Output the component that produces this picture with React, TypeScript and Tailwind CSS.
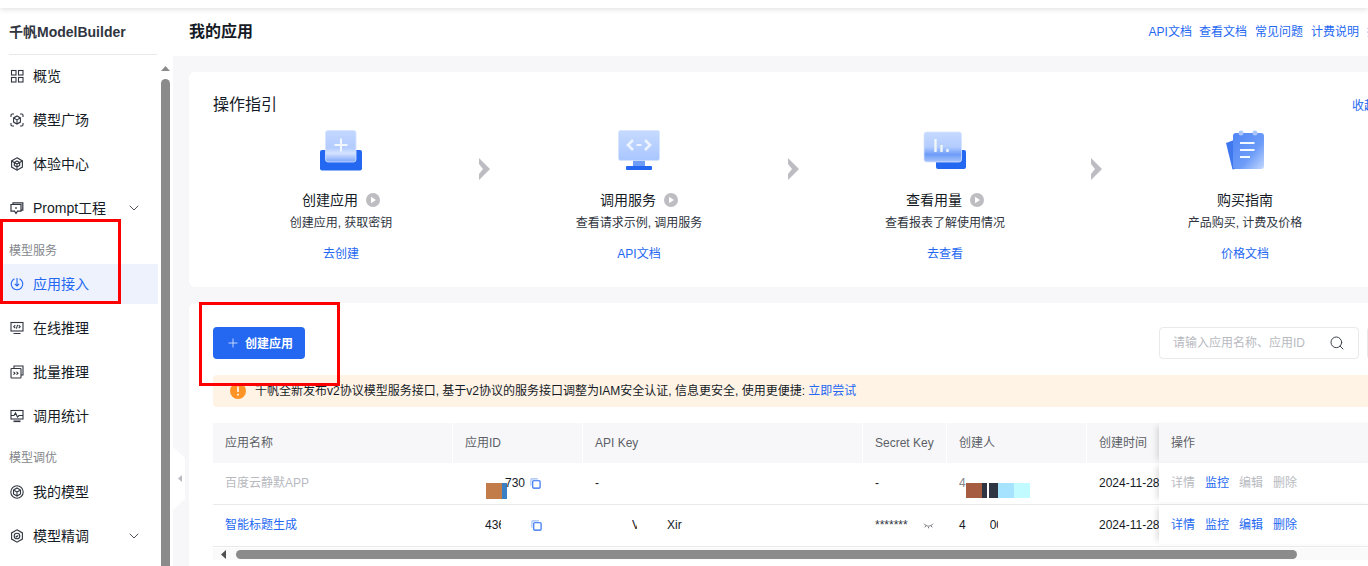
import { ChevronDown, Plus, Search } from 'lucide-react';
import type { ReactNode } from 'react';

const fontStack = 'font-["Liberation_Sans","Noto_Sans_CJK_SC",sans-serif]';

// Sidebar icons, all drawn on a 14x14 box
const NavIcons: Record<string, ReactNode> = {
  overview: (
    <g fill="none" stroke="currentColor" strokeWidth="1.1">
      <rect x="1.5" y="1.5" width="4.5" height="4.5" />
      <rect x="8.5" y="1.5" width="4.5" height="4.5" />
      <rect x="1.5" y="8.5" width="4.5" height="4.5" />
      <rect x="8.5" y="8.5" width="4.5" height="4.5" />
    </g>
  ),
  square: (
    <g fill="none" stroke="currentColor" strokeWidth="1.1">
      <path d="M1 4V2.2C1 1.5 1.5 1 2.2 1H4M10 1h1.8c.7 0 1.2.5 1.2 1.2V4M13 10v1.8c0 .7-.5 1.2-1.2 1.2H10M4 13H2.2C1.5 13 1 12.500 1 11.800V10" />
      <path d="M7 3l3.400 1.900v4.200L7 11 3.600 9.100V4.900zM3.600 4.900L7 6.900l3.400-2M7 6.900V11" />
    </g>
  ),
  center: (
    <g fill="none" stroke="currentColor" strokeWidth="1.1">
      <path d="M7 .8l5.400 3.100v6.200L7 13.200l-5.400-3.100V3.900z" />
      <path d="M7 4l2.700 1.500v3L7 10 4.300 8.500v-3zM1.600 3.900L7 7l5.400-3.100M7 7v6.200" />
    </g>
  ),
  prompt: (
    <g fill="none" stroke="currentColor" strokeWidth="1.2">
      <path d="M3 3V1.800h9.800v7.400H11" />
      <path d="M1 3.500h10v6.700H7.500L6 12.500l-1.500-2.300H1z" fill="#fff" />
      <path d="M6 6v2" />
    </g>
  ),
  access: (
    <g fill="none" stroke="currentColor" strokeWidth="1.1">
      <path d="M4.500 1.700a5.800 5.800 0 1 0 5 0" />
      <path d="M7 1v8M4.800 6.800L7 9l2.200-2.200" />
    </g>
  ),
  online: (
    <g fill="none" stroke="currentColor" strokeWidth="1.1">
      <rect x="1" y="1.500" width="12" height="8.500" />
      <path d="M5.300 4.200L3.800 5.700l1.500 1.500M8.700 4.200l1.500 1.500-1.500 1.500M7.600 3.800L6.400 7.700M3.500 12.500h7" />
    </g>
  ),
  batch: (
    <g fill="none" stroke="currentColor" strokeWidth="1.1">
      <path d="M4 3V1h9v9h-2" />
      <rect x="1" y="3.500" width="10" height="9.500" rx=".8" />
      <path d="M3.500 6.800l1.500 1.400-1.500 1.400M6.500 6.800L8 8.200 6.500 9.600" />
    </g>
  ),
  stats: (
    <g fill="none" stroke="currentColor" strokeWidth="1.1">
      <rect x="1" y="1.500" width="12" height="8.500" />
      <path d="M1 6.500h3l1.500-2.500 2 4L9 6.500h4" />
      <path d="M3.500 12.300h7" strokeWidth="1.600" />
    </g>
  ),
  model: (
    <g fill="none" stroke="currentColor" strokeWidth="1.1">
      <circle cx="7" cy="7" r="6.200" />
      <path d="M7 3l3.500 2v4L7 11 3.500 9V5zM3.500 5L7 7l3.500-2M7 7v4" />
    </g>
  ),
  tune: (
    <g fill="none" stroke="currentColor" strokeWidth="1.1">
      <path d="M7 .8l5.400 3.100v6.200L7 13.200l-5.400-3.100V3.900z" />
      <circle cx="7" cy="7" r="2.800" />
      <path d="M5.800 7l.9.9 1.500-1.600" />
    </g>
  ),
};

function NavItem({ icon, label, active, caret }: { icon: string; label: string; active?: boolean; caret?: boolean }) {
  return (
    <div className={`flex items-center pl-[10px] pr-4 text-sm ${active ? 'h-10 bg-[#edf2fd] text-[#2468f2]' : 'h-11 text-[#151b26]'}`}>
      <svg viewBox="0 0 14 14" className={`w-[14px] h-[14px] shrink-0 ${active ? '' : 'text-[#303540]'}`}>
        {NavIcons[icon]}
      </svg>
      <span className="ml-[9px]">{label}</span>
      {caret && <ChevronDown className="ml-auto text-[#303540]" size={16} strokeWidth={1.3} />}
    </div>
  );
}

function CreateIcon() {
  return (
    <svg viewBox="0 0 44 44" className="w-11 h-11">
      <defs>
        <linearGradient id="glassA" x1="0" y1="0" x2="0" y2="1">
          <stop offset="0" stopColor="#c3d8ff" />
          <stop offset="0.55" stopColor="#b3ccff" />
          <stop offset="0.72" stopColor="#d5e3ff" />
          <stop offset="1" stopColor="#7ea6fa" />
        </linearGradient>
      </defs>
      <rect x="1" y="21" width="42" height="20.500" rx="2" fill="#2468f2" />
      <rect x="6.500" y="1.500" width="30.500" height="31.500" rx="2.500" fill="url(#glassA)" stroke="#d6e3ff" strokeWidth="0.8" />
      <path d="M22 9.500v13M15.500 16h13" stroke="#f2f6ff" strokeWidth="2" />
    </svg>
  );
}

function ServiceIcon() {
  return (
    <svg viewBox="0 0 44 44" className="w-11 h-11">
      <defs>
        <linearGradient id="glassB" x1="0" y1="0" x2="0" y2="1">
          <stop offset="0" stopColor="#c6daff" />
          <stop offset="1" stopColor="#a9c6ff" />
        </linearGradient>
      </defs>
      <rect x="16" y="30" width="12" height="8" fill="#6e9df8" />
      <rect x="9" y="37" width="26" height="4" rx="1" fill="#2468f2" />
      <rect x="1.500" y="1.500" width="41" height="30" rx="2" fill="url(#glassB)" stroke="#d6e3ff" strokeWidth="0.8" />
      <path d="M16 11l-5 5 5 5M28 11l5 5-5 5" fill="none" stroke="#eef4ff" strokeWidth="2.600" />
      <path d="M19.500 16h5" fill="none" stroke="#eef4ff" strokeWidth="2" />
    </svg>
  );
}

function UsageIcon() {
  return (
    <svg viewBox="0 0 44 44" className="w-11 h-11">
      <defs>
        <linearGradient id="glassC" x1="0" y1="0" x2="0" y2="1">
          <stop offset="0" stopColor="#c6daff" />
          <stop offset="0.5" stopColor="#b3ccff" />
          <stop offset="0.75" stopColor="#6d9cf8" />
          <stop offset="1" stopColor="#a9c4fb" />
        </linearGradient>
      </defs>
      <rect x="13" y="21" width="30" height="19" rx="2" fill="#2468f2" />
      <rect x="1" y="3" width="37.500" height="30" rx="2.500" fill="url(#glassC)" stroke="#d6e3ff" strokeWidth="0.8" />
      <path d="M12.500 10v13M18.500 16v7M24.500 20V23" stroke="#eef6f6" strokeWidth="2.400" />
    </svg>
  );
}

function GuideIcon() {
  return (
    <svg viewBox="0 0 44 44" className="w-11 h-11">
      <defs>
        <linearGradient id="glassD" x1="0" y1="0" x2="1" y2="1">
          <stop offset="0" stopColor="#4f85f5" />
          <stop offset="0.6" stopColor="#6d9cf8" />
          <stop offset="1" stopColor="#c3d8ff" />
        </linearGradient>
      </defs>
      <path d="M3 14l8-3 6 28-7.500 1.500z" fill="#3f78ee" />
      <rect x="10" y="4" width="31" height="36" rx="3" fill="url(#glassD)" />
      <circle cx="18" cy="4" r="2.500" fill="#a9c6ff" />
      <circle cx="32" cy="4" r="2.500" fill="#a9c6ff" />
      <path d="M17 14h14.500M17 21h14.500M17 28h10" stroke="#f2f8ff" strokeWidth="2" />
    </svg>
  );
}

function PlayBadge() {
  return (
    <svg viewBox="0 0 14 14" className="w-[14px] h-[14px] ml-2">
      <circle cx="7" cy="7" r="7" fill="#bdbdc2" />
      <path d="M5 3.800L10 7l-5 3.200z" fill="#fff" />
    </svg>
  );
}

function StepArrow({ className }: { className: string }) {
  return (
    <svg viewBox="0 0 11 22" className={`w-[11px] h-[22px] shrink-0 mt-[29px] ${className}`}>
      <path d="M0 0l11 11L0 22v-6l4-5-4-5z" fill="#bcbcc2" />
    </svg>
  );
}

function Step({ icon, title, play, desc, link }: { icon: ReactNode; title: string; play?: boolean; desc: string; link: string }) {
  return (
    <div className="w-64 shrink-0 flex flex-col items-center">
      {icon}
      <div className="mt-[17px] flex items-center h-5 text-sm text-[#151b26]">
        {title}
        {play && <PlayBadge />}
      </div>
      <div className="mt-1 h-[18px] leading-[18px] text-xs text-[#303540]">{desc}</div>
      <a className="mt-[13px] h-[18px] leading-[18px] text-xs text-[#2468f2]">{link}</a>
    </div>
  );
}

function CopyIcon() {
  return (
    <svg viewBox="0 0 12 12" className="w-[11px] h-[11px] shrink-0 text-[#2468f2]">
      <path d="M1 8.500V1.800C1 1.300 1.300 1 1.800 1h6.700" fill="none" stroke="#9dbcf8" strokeWidth="1.200" />
      <rect x="3" y="3" width="8" height="8" rx="0.800" fill="none" stroke="currentColor" strokeWidth="1.200" />
    </svg>
  );
}

const cols = 'grid grid-cols-[240px_130px_280px_84px_140px_72px_1fr]';
const cell = 'pl-3 flex items-center overflow-hidden whitespace-nowrap';
const fixedCell = 'pl-3 flex items-center gap-[10px] bg-white shadow-[-5px_0_6px_-3px_rgba(0,0,0,0.14)]';

export default function App() {
  return (
    <div className={`w-[1368px] h-[566px] overflow-hidden relative flex flex-col bg-white ${fontStack}`}>
      <div className="h-2 shrink-0 bg-white shadow-[0_2px_5px_rgba(0,0,0,0.1)] relative z-10" />

      <div className="flex flex-1 min-h-0">
        {/* sidebar */}
        <aside className="w-[173px] shrink-0 bg-white flex flex-col overflow-hidden">
          <div className="ml-[9px] w-[148px] h-[47px] shrink-0 border-b border-[#e8e9eb] flex items-center pt-[1px] text-sm font-semibold text-[#303540]">
            千帆ModelBuilder
          </div>
          <div className="flex flex-1 min-h-0 -mt-px">
            <nav className="w-[158px] shrink-0 flex flex-col">
              <NavItem icon="overview" label="概览" />
              <NavItem icon="square" label="模型广场" />
              <NavItem icon="center" label="体验中心" />
              <NavItem icon="prompt" label="Prompt工程" caret />
              <div className="h-[34px] shrink-0 pl-[9px] pt-3 text-xs leading-[18px] text-[#84868c]">模型服务</div>
              <NavItem icon="access" label="应用接入" active />
              <div className="h-[2px] shrink-0" />
              <NavItem icon="online" label="在线推理" />
              <NavItem icon="batch" label="批量推理" />
              <NavItem icon="stats" label="调用统计" />
              <div className="h-8 shrink-0 pl-[9px] pt-[11px] text-xs leading-[18px] text-[#84868c]">模型调优</div>
              <NavItem icon="model" label="我的模型" />
              <NavItem icon="tune" label="模型精调" caret />
            </nav>
            <div className="ml-[3px] w-[9px] shrink-0 flex flex-col items-center pt-3">
              <svg viewBox="0 0 9 5" className="w-[9px] h-[5px]">
                <path d="M4.500 0L9 5H0z" fill="#8b8b8b" />
              </svg>
              <div className="mt-2 w-[9px] flex-1 rounded-t-[5px] bg-[#8b8b8b]" />
            </div>
          </div>
        </aside>

        {/* main */}
        <main className="flex-1 min-w-0 overflow-hidden bg-[#f7f7f9] flex flex-col">
          <header className="h-12 shrink-0 bg-white pl-4 flex items-center justify-between whitespace-nowrap">
            <h1 className="text-base font-semibold text-[#151b26]">我的应用</h1>
            <div className="flex gap-2 text-xs text-[#2468f2] -mr-[35px]">
              <a>API文档</a>
              <a className="ml-[-1px]">查看文档</a>
              <a>常见问题</a>
              <a>计费说明</a>
              <a>控制台</a>
            </div>
          </header>

          <section className="mt-4 ml-4 w-[1211px] h-[215px] shrink-0 bg-white rounded-md px-6 pt-[21px]">
            <div className="flex items-center justify-between h-6">
              <h2 className="text-base text-[#151b26]">操作指引</h2>
              <a className="text-xs text-[#2468f2] pt-[2px]">收起</a>
            </div>
            <div className="mt-3 flex items-start">
              <Step icon={<CreateIcon />} title="创建应用" play desc="创建应用, 获取密钥" link="去创建" />
              <StepArrow className="ml-[10px] mr-[21px]" />
              <Step icon={<ServiceIcon />} title="调用服务" play desc="查看请求示例, 调用服务" link="API文档" />
              <StepArrow className="ml-[21px] mr-[18px]" />
              <Step icon={<UsageIcon />} title="查看用量" play desc="查看报表了解使用情况" link="去查看" />
              <StepArrow className="ml-[18px] mr-[15px]" />
              <Step icon={<GuideIcon />} title="购买指南" desc="产品购买, 计费及价格" link="价格文档" />
            </div>
          </section>

          <section className="mt-4 ml-4 w-[1211px] flex-1 bg-white rounded-t-md px-6 pt-6">
            <div className="flex items-start justify-between h-8">
              <button className="w-[92px] h-8 rounded bg-[#2468f2] text-white text-xs font-semibold flex items-center pl-[13px]">
                <Plus size={14} strokeWidth={1.5} className="text-[#d6e3ff]" />
                <span className="ml-[5px] pt-[2px]">创建应用</span>
              </button>
              <div className="flex">
                <div className="w-[200px] h-8 rounded border border-[#e8e9eb] flex items-center pl-[13px] pr-[13px] text-xs text-[#b8babf]">
                  请输入应用名称、应用ID
                  <Search size={16} strokeWidth={1.4} className="ml-auto text-[#303540]" />
                </div>
                <div className="ml-2 w-[9px] h-8 rounded-l border border-r-0 border-[#e8e9eb]" />
              </div>
            </div>

            <div className="mt-4 h-8 rounded bg-[#fff3e6] flex items-center pl-[17px] text-xs text-[#151b26]">
              <svg viewBox="0 0 16 16" className="w-4 h-4 shrink-0">
                <circle cx="8" cy="8" r="8" fill="#ff9326" />
                <path d="M8 3.500v5.500M8 10.800v1.700" stroke="#fff" strokeWidth="1.600" />
              </svg>
              <span className="ml-[9px]">
                千帆全新发布v2协议模型服务接口, 基于v2协议的服务接口调整为IAM安全认证, 信息更安全, 使用更便捷: <a className="text-[#2468f2]">立即尝试</a>
              </span>
            </div>

            {/* table */}
            <div className="mt-4 text-xs">
              <div className={`${cols} h-10 bg-[#f7f7f9] text-[#5c5f66]`}>
                <div className={`${cell} border-r border-white`}>应用名称</div>
                <div className={`${cell} border-r border-white`}>应用ID</div>
                <div className={`${cell} border-r border-white`}>API Key</div>
                <div className={`${cell} border-r border-white`}>Secret Key</div>
                <div className={`${cell} border-r border-white`}>创建人</div>
                <div className={cell}>创建时间</div>
                <div className="pl-3 flex items-center bg-[#f7f7f9] shadow-[-5px_0_6px_-3px_rgba(0,0,0,0.14)]">操作</div>
              </div>

              <div className={`${cols} h-[42px] pb-[2px] border-b border-[#e8e9eb] text-[#151b26]`}>
                <div className={`${cell} text-[#b8babf]`}>百度云静默APP</div>
                <div className="pl-[33px] flex items-center">
                  <span className="w-4 h-4 mt-[16px] shrink-0 bg-[#c17c4a]" />
                  <span className="w-[5px] h-4 mt-[16px] shrink-0 bg-[#3a7fc4]" />
                  <span className="-ml-[2px]">730</span>
                  <span className="ml-[5px] pt-[2px]"><CopyIcon /></span>
                </div>
                <div className={cell}>-</div>
                <div className={cell}>-</div>
                <div className={cell}>
                  <span className="w-[7px] overflow-hidden text-[#84868c]">4</span>
                  <span className="w-4 h-[15px] mt-[16px] shrink-0 bg-[#a55c40]" />
                  <span className="w-[5px] h-[15px] mt-[16px] shrink-0 bg-[#2f3542]" />
                  <span className="w-[9px] h-[15px] mt-[16px] ml-[2px] shrink-0 bg-[#2f3542]" />
                  <span className="w-4 h-[15px] mt-[16px] shrink-0 bg-[#a6e3ff]" />
                  <span className="w-4 h-[15px] mt-[16px] shrink-0 bg-[#c1fbff]" />
                </div>
                <div className={cell}>2024-11-28</div>
                <div className={fixedCell}>
                  <a className="text-[#b8babf]">详情</a>
                  <a className="text-[#2468f2]">监控</a>
                  <a className="text-[#b8babf]">编辑</a>
                  <a className="text-[#b8babf]">删除</a>
                </div>
              </div>

              <div className={`${cols} h-[42px] pb-[2px] border-b border-[#e8e9eb] text-[#151b26]`}>
                <div className={`${cell} text-[#2468f2]`}>智能标题生成</div>
                <div className="pl-[32px] flex items-center">
                  <span className="w-4 overflow-hidden shrink-0">436</span>
                  <span className="ml-[30px] pt-[2px]"><CopyIcon /></span>
                </div>
                <div className={cell}>
                  <span className="ml-[37px] w-[5px] overflow-hidden">V</span>
                  <span className="ml-[30px]">Xir</span>
                </div>
                <div className={cell}>
                  <span className="text-[#303540]">*******</span>
                  <svg viewBox="0 0 12 8" className="ml-[15px] mt-[3px] w-[11px] h-[8px] shrink-0">
                    <path d="M1 1.500c2.500 3.500 7.500 3.500 10 0M3 4L2 5.500M6 5v1.500M9 4l1 1.500" fill="none" stroke="#5c5f66" strokeWidth="0.900" />
                  </svg>
                </div>
                <div className={cell}>
                  <span>4</span>
                  <span className="ml-[24px] w-2 overflow-hidden">00</span>
                </div>
                <div className={cell}>2024-11-28</div>
                <div className={`${fixedCell} text-[#2468f2]`}>
                  <a>详情</a>
                  <a>监控</a>
                  <a>编辑</a>
                  <a>删除</a>
                </div>
              </div>

              {/* horizontal scrollbar */}
              <div className="mt-px h-3 bg-[#fafafa] flex items-center pl-2">
                <svg viewBox="0 0 5 9" className="w-[5px] h-[9px] shrink-0">
                  <path d="M0 4.500L5 0v9z" fill="#505050" />
                </svg>
                <div className="ml-[10px] w-[1061px] h-[9px] rounded-[5px] bg-[#8b8b8b]" />
              </div>
            </div>
          </section>
        </main>
      </div>

      {/* sidebar collapse handle, sits over the page edge */}
      <svg viewBox="0 0 12 63" className="absolute left-[173px] top-[447px] w-3 h-[63px]">
        <path d="M0 0l12 11v41L0 63z" fill="#fff" />
        <path d="M9 28v7l-4-3.500z" fill="#b8babf" />
      </svg>

      {/* red annotation boxes drawn on top of the screenshot */}
      <div className="absolute left-0 top-[219px] w-[121px] h-[85px] border-[3px] border-[#ff0000]" />
      <div className="absolute left-[199px] top-[302px] w-[141px] h-[84px] border-[3px] border-[#ff0000]" />
    </div>
  );
}
